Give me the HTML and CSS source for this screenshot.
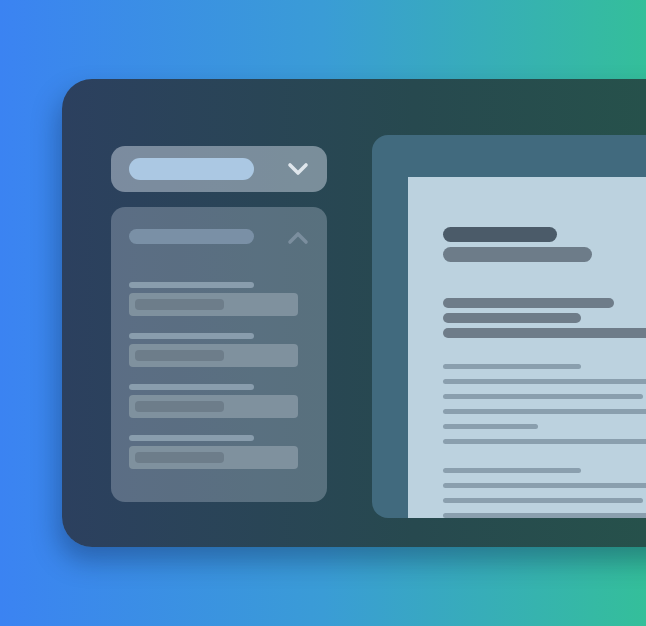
FILE: index.html
```html
<!DOCTYPE html>
<html lang="en">
<head>
<meta charset="utf-8">
<title>Form preview</title>
<link rel="stylesheet" href="styles.css">
</head>
<body>
<div class="stage">
  <div class="card">
    <aside class="sidebar">
      <div class="select">
        <span class="select-pill"></span>
        <svg class="chev chev-down" width="22" height="14" viewBox="0 0 22 14"><polyline points="3,3 11,11 19,3" fill="none" stroke="currentColor" stroke-width="3.6" stroke-linecap="round" stroke-linejoin="round"/></svg>
      </div>
      <div class="accordion">
        <div class="acc-head">
          <span class="acc-pill"></span>
          <svg class="chev chev-up" width="22" height="14" viewBox="0 0 22 14"><polyline points="3,11 11,3 19,11" fill="none" stroke="currentColor" stroke-width="3.6" stroke-linecap="round" stroke-linejoin="round"/></svg>
        </div>
        <div class="fields">
          <div class="field"><span class="label"></span><div class="input"><span class="value"></span></div></div>
          <div class="field"><span class="label"></span><div class="input"><span class="value"></span></div></div>
          <div class="field"><span class="label"></span><div class="input"><span class="value"></span></div></div>
          <div class="field"><span class="label"></span><div class="input"><span class="value"></span></div></div>
        </div>
      </div>
    </aside>
    <section class="preview">
      <div class="doc">
        <span class="title"></span>
        <span class="subtitle"></span>
        <div class="lead">
          <span class="bar w171"></span>
          <span class="bar w138"></span>
          <span class="bar wfull"></span>
        </div>
        <div class="para">
          <span class="line w138"></span>
          <span class="line wfull"></span>
          <span class="line w200"></span>
          <span class="line wfull"></span>
          <span class="line w95"></span>
          <span class="line wfull"></span>
        </div>
        <div class="para">
          <span class="line w138"></span>
          <span class="line wfull"></span>
          <span class="line w200"></span>
          <span class="line wfull"></span>
        </div>
      </div>
    </section>
  </div>
</div>
</body>
</html>
```
FILE: styles.css
```css
* { box-sizing: border-box; }
html, body { margin: 0; padding: 0; }
body {
  width: 646px;
  height: 626px;
  overflow: hidden;
  background: linear-gradient(to right, #3b83f2 0%, #3a9cd6 50%, #34bf9a 100%);
}
.stage {
  width: 646px;
  height: 626px;
  overflow: hidden;
  padding: 79px 0 0 62px;
}
.card {
  width: 640px;
  height: 468px;
  border-radius: 30px 0 0 30px;
  background: linear-gradient(to right, #2c405f 0%, #27494f 55%, #26534a 100%);
  box-shadow: -4px 14px 26px rgba(10, 30, 70, 0.35);
  display: flex;
  align-items: flex-start;
  padding-left: 49px;
}
.sidebar {
  width: 216px;
  margin-top: 67px;
  display: flex;
  flex-direction: column;
  gap: 15px;
  flex-shrink: 0;
}
.select {
  height: 46px;
  border-radius: 14px;
  background: rgba(203, 213, 225, 0.5);
  display: flex;
  align-items: center;
  justify-content: space-between;
  padding: 0 18px;
}
.select-pill {
  width: 125px;
  height: 22px;
  border-radius: 11px;
  background: #abc8e3;
}
.chev { display: block; }
.chev-down { color: #dfe6ec; }
.chev-up { color: #7b8e9e; margin-top: 2px; }
.accordion {
  height: 295px;
  border-radius: 14px;
  background: rgba(203, 213, 225, 0.3);
  padding: 22px 18px 0;
}
.acc-head {
  display: flex;
  align-items: center;
  justify-content: space-between;
  height: 15px;
}
.acc-pill {
  width: 125px;
  height: 15px;
  border-radius: 8px;
  background: #7a90a6;
}
.fields {
  margin-top: 38px;
  display: flex;
  flex-direction: column;
  gap: 17px;
}
.field {
  display: flex;
  flex-direction: column;
  gap: 5px;
}
.label {
  width: 125px;
  height: 6px;
  border-radius: 3px;
  background: #899dad;
}
.input {
  width: 169px;
  height: 23px;
  border-radius: 4px;
  background: #7f919e;
  padding: 6px;
}
.value {
  display: block;
  width: 89px;
  height: 11px;
  border-radius: 4px;
  background: #6d7d8a;
}
.preview {
  margin-left: 45px;
  margin-top: 56px;
  height: 383px;
  flex: 1;
  border-radius: 16px 0 0 16px;
  background: #416a7e;
  padding: 42px 0 0 36px;
  overflow: hidden;
}
.doc {
  width: 420px;
  height: 400px;
  background: #bcd2df;
  padding: 50px 0 0 35px;
  display: flex;
  flex-direction: column;
}
.title {
  width: 114px;
  height: 15px;
  border-radius: 8px;
  background: #4b5b69;
}
.subtitle {
  margin-top: 5px;
  width: 149px;
  height: 15px;
  border-radius: 8px;
  background: #6d7c89;
}
.lead {
  margin-top: 36px;
  display: flex;
  flex-direction: column;
  gap: 5px;
}
.bar {
  height: 10px;
  border-radius: 5px;
  background: #6e7c89;
}
.para {
  margin-top: 26px;
  display: flex;
  flex-direction: column;
  gap: 10px;
}
.para + .para { margin-top: 24px; }
.line {
  height: 5px;
  border-radius: 3px;
  background: #8a9fae;
}
.w171 { width: 171px; }
.w138 { width: 138px; }
.w200 { width: 200px; }
.w95 { width: 95px; }
.wfull { width: 400px; }
```
